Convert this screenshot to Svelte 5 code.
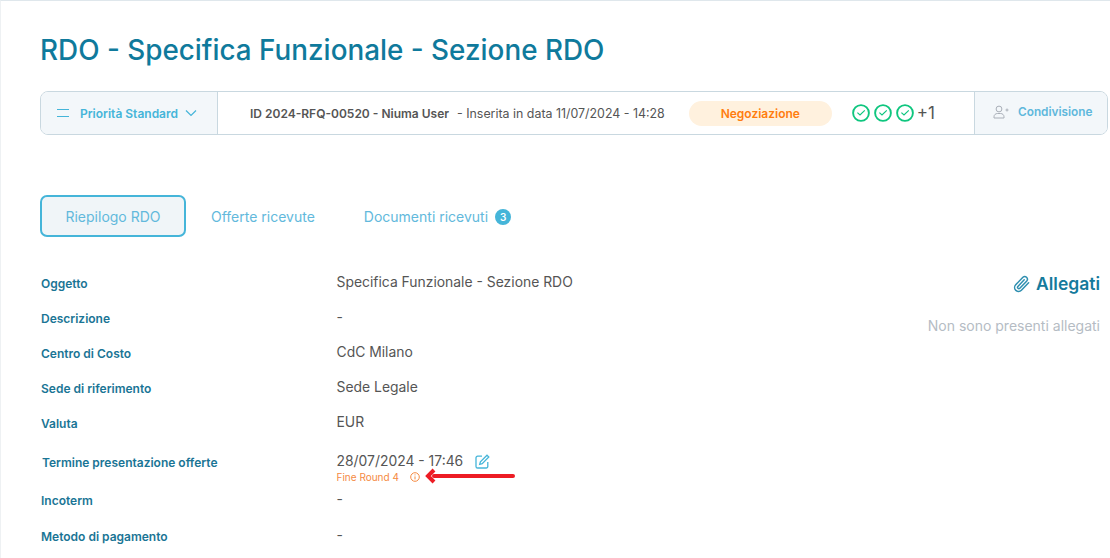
<script>
  const rows = [
    { label: "Oggetto", value: "Specifica Funzionale - Sezione RDO" },
    { label: "Descrizione", value: "-" },
    { label: "Centro di Costo", value: "CdC Milano" },
    { label: "Sede di riferimento", value: "Sede Legale" },
    { label: "Valuta", value: "EUR" }
  ];
</script>

<div class="page">
  <h1>RDO - Specifica Funzionale - Sezione RDO</h1>

  <div class="bar">
    <div class="priority">
      <svg width="12" height="10" viewBox="0 0 12 10" fill="none" stroke="#45b5d9" stroke-width="1.2"><path d="M0 1.5h12M0 8.5h12" /></svg>
      <span class="pri-text">Priorità Standard</span>
      <svg width="12" height="8" viewBox="0 0 12 8" fill="none" stroke="#45b5d9" stroke-width="1.2"><path d="M1 1.5l5 5 5-5" /></svg>
    </div>
    <div class="info">
      <strong>ID 2024-RFQ-00520 - Niuma User</strong>
      <span class="date">- Inserita in data 11/07/2024 - 14:28</span>
      <span class="pill">Negoziazione</span>
      <span class="checks">
        {#each [1, 2, 3] as c (c)}
          <svg width="18" height="18" viewBox="0 0 18 18" fill="none"><circle cx="9" cy="9" r="7.9" stroke="#0fc67f" stroke-width="1.9" /><path d="M5.4 8.6l2.6 2.4 4.8-4.6" stroke="#0fc67f" stroke-width="1.2" /></svg>
        {/each}
        <span class="plus">+1</span>
      </span>
    </div>
    <div class="share">
      <svg width="16" height="14" viewBox="0 0 16 14" fill="none" stroke="#a9afb8" stroke-width="1"><circle cx="6" cy="4" r="2.9" /><path d="M1 13v-1.2c0-2 1.6-3.3 3.4-3.3h3.2c1.8 0 3.4 1.3 3.4 3.3V13zM12.5 5h3M14 3.5v3" /></svg>
      <span>Condivisione</span>
    </div>
  </div>

  <div class="tabs">
    <button class="tab active">Riepilogo RDO</button>
    <button class="tab">Offerte ricevute</button>
    <button class="tab">Documenti ricevuti <span class="badge">3</span></button>
  </div>

  <div class="content">
    <div class="details">
      {#each rows as row (row.label)}
        <div class="row">
          <span class="label">{row.label}</span>
          <span class="value">{row.value}</span>
        </div>
      {/each}
      <div class="row deadline">
        <span class="label">Termine presentazione offerte</span>
        <div class="value">
          <div class="when">
            28/07/2024 - 17:46
            <svg width="15" height="15" viewBox="0 0 15 15" fill="none" stroke="#45b5d9" stroke-width="1.3"><path d="M7 2.2H2.6A1.6 1.6 0 0 0 1 3.8v8.6A1.6 1.6 0 0 0 2.6 14h8.6a1.6 1.6 0 0 0 1.6-1.6V8" /><path d="M12 1.2l1.8 1.8-6.6 6.6-2.5.7.7-2.5z" /></svg>
          </div>
          <div class="round">
            Fine Round 4
            <svg width="10" height="10" viewBox="0 0 10 10" fill="none" stroke="#f58a42" stroke-width="1"><circle cx="5" cy="5" r="4.3" /><path d="M5 4.4v3M5 2.4v1" /></svg>
            <svg class="arrow" width="90" height="16" viewBox="0 0 90 16"><path d="M88 8H9" stroke="#ed1c24" stroke-width="4" stroke-linecap="round" /><path d="M9 2L3 8l6 6" stroke="#ed1c24" stroke-width="4" fill="none" /></svg>
          </div>
        </div>
      </div>
      <div class="row incoterm">
        <span class="label">Incoterm</span>
        <span class="value">-</span>
      </div>
      <div class="row">
        <span class="label">Metodo di pagamento</span>
        <span class="value">-</span>
      </div>
    </div>

    <aside>
      <h2>
        <svg width="18" height="18" viewBox="0 0 18 18" fill="none" stroke="#2f8fb0" stroke-width="1.5" stroke-linecap="round"><path d="M16.6 7.8l-7.2 7.4a3.9 3.9 0 0 1-5.7-5.4l7.2-7.6a2.7 2.7 0 0 1 3.9 3.7l-7 7.3a1.3 1.3 0 0 1-1.9-1.8l6.3-6.6" /></svg>
        Allegati
      </h2>
      <p>Non sono presenti allegati</p>
    </aside>
  </div>
</div>

<style>
  :global(body) {
    margin: 0;
    background: #fff;
  }

  .page {
    height: 558px;
    box-sizing: border-box;
    overflow: hidden;
    border-top: 1px solid #dfe7ec;
    border-left: 1px solid #eef1f3;
    padding: 0 2px 0 39px;
    font-family: Inter, "Liberation Sans", sans-serif;
    color: #555;
  }

  h1 {
    margin: 31px 0 0;
    font-size: 27.85px;
    line-height: 36px;
    font-weight: 500;
    color: #0f7a9c;
  }

  .bar {
    display: flex;
    height: 44px;
    box-sizing: border-box;
    margin-top: 23px;
    border: 1px solid #c9d8e0;
    border-radius: 8px;
    overflow: hidden;
  }

  .priority {
    width: 177px;
    box-sizing: border-box;
    display: flex;
    align-items: center;
    padding-left: 16px;
    gap: 11px;
    background: #f3f7fa;
    border-right: 1px solid #c9d8e0;
    font-size: 12px;
    font-weight: 600;
    color: #45b5d9;
  }

  .pri-text {
    margin-right: -4px;
  }

  .info {
    flex: 1;
    display: flex;
    align-items: center;
    padding-left: 32px;
    font-size: 12px;
  }

  .info strong {
    font-weight: 600;
    color: #555;
  }

  .date {
    margin-left: 8px;
    font-size: 12.4px;
    color: #555;
  }

  .pill {
    width: 143px;
    height: 25px;
    margin-left: 24px;
    display: flex;
    align-items: center;
    justify-content: center;
    border-radius: 13px;
    background: #fff1de;
    color: #ff7d0f;
    font-weight: 600;
  }

  .checks {
    display: flex;
    align-items: center;
    gap: 4px;
    margin-left: 20px;
  }

  .plus {
    font-size: 17px;
    margin-left: -1px;
  }

  .share {
    width: 133px;
    box-sizing: border-box;
    display: flex;
    align-items: center;
    padding-left: 18px;
    padding-bottom: 2px;
    gap: 9px;
    background: #f3f7fa;
    border-left: 1px solid #c9d8e0;
    font-size: 11.8px;
    font-weight: 600;
    color: #5fb8dc;
  }

  .tabs {
    display: flex;
    align-items: center;
    margin-top: 60px;
    gap: 25px;
  }

  .tab {
    font: inherit;
    font-size: 14px;
    color: #62b9dc;
    background: none;
    border: none;
    padding: 1px 0 0;
  }

  .tab.active {
    width: 146px;
    height: 42px;
    background: #f0f5f8;
    border: 2px solid #45b5d9;
    border-radius: 7px;
  }

  .tab:last-child {
    margin-left: 24px;
    display: flex;
    align-items: center;
    gap: 7px;
  }

  .badge {
    width: 16px;
    height: 16px;
    border-radius: 50%;
    background: #45b5d9;
    color: #fff;
    font-size: 10px;
    font-weight: 600;
    display: flex;
    align-items: center;
    justify-content: center;
  }

  .content {
    display: flex;
    justify-content: space-between;
    margin-top: 29px;
  }

  .details {
    flex: 1;
  }

  .row {
    display: grid;
    grid-template-columns: 295.5px 1fr;
    align-items: center;
    height: 35px;
    padding-left: 1px;
  }

  .label {
    font-size: 12px;
    font-weight: 600;
    color: #1a7595;
  }

  .value {
    font-size: 13.9px;
    color: #555;
    margin-top: -3px;
  }

  .row.deadline {
    height: 42px;
    padding-left: 2px;
    grid-template-columns: 294.5px 1fr;
    align-items: start;
  }

  .deadline .label {
    margin-top: 14px;
  }

  .deadline .value {
    margin-top: 12px;
  }

  .when {
    display: flex;
    align-items: center;
    gap: 12px;
  }

  .round {
    position: relative;
    display: flex;
    align-items: center;
    gap: 11px;
    margin-top: 2px;
    font-size: 10px;
    color: #f58a42;
  }

  .arrow {
    position: absolute;
    left: 88px;
    top: -3px;
  }

  .row.incoterm {
    height: 35px;
  }

  .row.incoterm + .row {
    margin-top: 1px;
  }

  aside {
    text-align: right;
    padding-right: 8px;
  }

  h2 {
    margin: 0;
    display: flex;
    align-items: center;
    justify-content: flex-end;
    gap: 6px;
    font-size: 17.5px;
    line-height: 24px;
    font-weight: 600;
    color: #147a9c;
    padding-top: 6px;
  }

  p {
    margin: 21px 0 0;
    font-size: 14px;
    color: #b5bcc4;
  }
</style>
